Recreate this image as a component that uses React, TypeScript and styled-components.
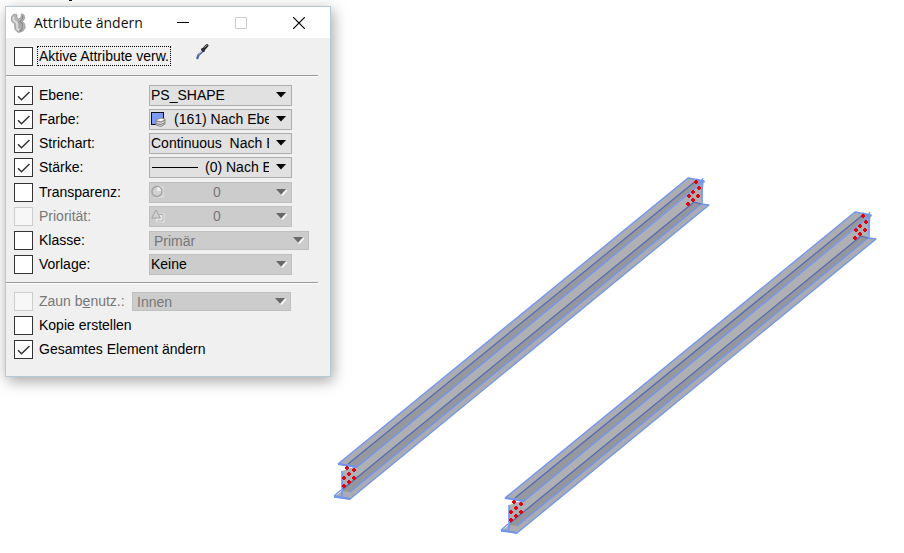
import React, { useState } from 'react';
import styled, { createGlobalStyle, css } from 'styled-components';

const GlobalStyle = createGlobalStyle`
  *, *::before, *::after { box-sizing: border-box; }
  body {
    margin: 0;
    background: #fff;
    color: #000;
    font: 14px/20px "Liberation Sans", Arial, sans-serif;
  }
`;

const Desktop = styled.main`
  display: flex;
  align-items: flex-start;
  position: relative;
  padding-left: 5px;
  min-height: 100vh;
  overflow: hidden;
`;

const TextRemnant = styled.span`
  position: absolute;
  top: 0;
  left: 69px;
  width: 3px;
  height: 1px;
  background: #111;
`;

const Dialog = styled.section`
  flex: 0 0 326px;
  margin-top: 6px;
  padding-bottom: 15px;
  background: #f0f0f0;
  border: 1px solid #b4c9d6;
  box-shadow: 2px 4px 14px rgba(0, 0, 0, 0.36);
`;

const TitleBar = styled.header`
  display: flex;
  align-items: center;
  height: 31px;
  padding: 0 2px 0 4px;
  background: #fff;
`;

const Title = styled.h1`
  flex: 1;
  margin: 0 0 0 6px;
  font: 14px/20px "Open Sans", "Noto Sans", sans-serif;
  color: #111;
`;

const WindowButton = styled.button`
  display: flex;
  align-items: center;
  justify-content: center;
  width: 58px;
  height: 30px;
  padding: 0;
  border: 0;
  background: none;
  color: #000;
  &:disabled { color: #ccc; }
`;

const Group = styled.div<{ $top: number; $bottom: number }>`
  padding: ${p => p.$top}px 0 ${p => p.$bottom}px 8px;
`;

const Divider = styled.hr`
  margin: 0 12px 0 0;
  border: 0;
  border-top: 1px solid #999;
  border-bottom: 1px solid #fff;
`;

const Row = styled.div`
  display: flex;
  align-items: center;
  height: 24px;
`;

const Check = styled.input`
  appearance: none;
  flex: none;
  width: 19px;
  height: 19px;
  margin: 0;
  background: #fff;
  border: 1px solid #333;
  &:disabled { background: #f7f7f7; border-color: #ccc; }
  &:checked {
    background: #fff url("data:image/svg+xml,%3Csvg xmlns='http://www.w3.org/2000/svg' width='17' height='17'%3E%3Cpath d='M3 9.2 6.5 12.7 14.5 5' fill='none' stroke='%23333' stroke-width='1.5'/%3E%3C/svg%3E") center no-repeat;
  }
`;

const Caption = styled.label<{ $width?: number; $dim?: boolean; $focus?: boolean }>`
  flex: none;
  margin-left: 4px;
  padding: 0 1px;
  border: 1px dotted ${p => (p.$focus ? '#000' : 'transparent')};
  width: ${p => (p.$width ? `${p.$width}px` : 'auto')};
  color: ${p => (p.$dim ? '#777' : '#000')};
  line-height: 18px;
  white-space: nowrap;
`;

const PickerButton = styled.button`
  display: flex;
  margin: 0 0 8px 24px;
  padding: 0;
  border: 0;
  background: none;
`;

const Combo = styled.div`
  display: grid;
  align-items: center;
  & > * { grid-area: 1 / 1; }
`;

const Choice = styled.select<{ $width: number; $indent: number; $low?: boolean; $grey?: boolean; $dim?: boolean }>`
  appearance: none;
  width: ${p => p.$width}px;
  height: ${p => (p.$low ? 19 : 21)}px;
  margin: 0;
  padding: 0 22px 0 ${p => p.$indent}px;
  overflow: hidden;
  border: 1px solid #adadad;
  border-radius: 0;
  background: #e1e1e1;
  font: 14px/18px "Liberation Sans", Arial, sans-serif;
  color: ${p => (p.$dim ? '#777' : '#000')};
  opacity: 1;
  ${p => p.$grey && css`
    background: #ccc;
    border-color: #bfbfbf;
  `}
`;

const Arrow = styled.svg`
  justify-self: end;
  margin-right: 5px;
  pointer-events: none;
`;

const Symbol = styled.span`
  display: flex;
  justify-self: start;
  margin-left: 2px;
  pointer-events: none;
`;

const Scene = styled.svg`
  display: block;
  flex: 1;
  min-width: 0;
`;

const WrenchIcon = () => (
  <svg width="18" height="20" viewBox="0 0 18 20" aria-hidden="true">
    <path d="M4 1 1.5 3.5 1.5 8 4.5 11 5 16.5 8 19.5 12.5 18.5 15.2 15 14.5 10.5 12.5 8.5 14.8 5.5 14 2 11.5.8 10.8 4.5 8.5 6 7 4.5 7 1.8Z" fill="#b4b4b4" stroke="#999" strokeWidth=".8" />
    <path d="M3.5 3.5 3.5 7 7 10 7.2 15.5 9 17.5" fill="none" stroke="#dedede" strokeWidth="1.8" />
    <path d="M12.8 2.5 12.5 5.5 10 8.5 12.5 11 12 16.5 9.5 18.5" fill="none" stroke="#868686" strokeWidth="1.1" />
    <path d="M8 8.5 10 11 9.5 15" fill="none" stroke="#a0a0a0" strokeWidth="1.2" />
  </svg>
);

const DropperIcon = () => (
  <svg width="14" height="18" viewBox="0 0 14 18" aria-hidden="true">
    <path d="M8.5 7.5 3.5 12 2 16" fill="none" stroke="#48669b" strokeWidth="2.2" />
    <path d="M8 7 3.5 11.5" stroke="#b9c5d6" strokeWidth="1" />
    <path d="M6.5 5.5 9.5 8.5" stroke="#292b33" strokeWidth="1.8" />
    <path d="M8 7 12 2.5" stroke="#292b33" strokeWidth="3" strokeLinecap="round" />
    <path d="M9.5 4.5 12 2" stroke="#999" strokeWidth="1" />
  </svg>
);

const ColourIcon = () => (
  <svg width="15" height="15" viewBox="0 0 15 15" aria-hidden="true">
    <rect x=".5" y=".5" width="12" height="12" fill="#7d98fb" stroke="#111" />
    <path d="M5 8 10 6 14 7 14 12 10 14.5 5 13Z" fill="#ddd" stroke="#888" />
    <path d="M5 9 10 10 14 8M5 11.5 10 12.5 14 10.5" fill="none" stroke="#777" />
    <path d="M6 8 10 6.8 13 7.5 10 9Z" fill="#fff" />
  </svg>
);

const LineIcon = () => (
  <svg width="47" height="3" viewBox="0 0 47 3" aria-hidden="true">
    <path d="M1 1.5H47" stroke="#000" />
  </svg>
);

const SphereIcon = () => (
  <svg width="14" height="14" viewBox="0 0 14 14" aria-hidden="true">
    <path d="M8 1H13V13H3" fill="#d8d8d8" />
    <circle cx="6" cy="6.5" r="5" fill="#d2d2d2" stroke="#a0a0a0" strokeWidth="1.3" />
    <path d="M6 2V6H10A4 4 0 0 0 6 2" fill="#eee" />
  </svg>
);

const PriorityIcon = () => (
  <svg width="14" height="14" viewBox="0 0 14 14" aria-hidden="true">
    <path d="M8 5.5H12.5V12.5H6V10" fill="#e4e4e4" stroke="#f3f3f3" strokeWidth="1.5" />
    <path d="M5 1 9.3 9H.7Z" fill="#d0d0d0" stroke="#a3a3a3" />
    <path d="M8 5.5H12V12H6" fill="none" stroke="#aaa" />
  </svg>
);

type AttributeRow = {
  id: string;
  label: string;
  value: string;
  locked?: boolean;
  dim?: boolean;
  grey?: boolean;
  width?: number;
  low?: boolean;
  indent?: number;
  icon?: React.ReactNode;
};

const levelAttributes: AttributeRow[] = [
  { id: 'ebene', label: 'Ebene:', value: 'PS_SHAPE' },
  { id: 'farbe', label: 'Farbe:', value: '(161) Nach Ebene', indent: 24, icon: <ColourIcon /> },
  { id: 'strichart', label: 'Strichart:', value: 'Continuous\u00a0 Nach Ebene' },
  { id: 'staerke', label: 'Stärke:', value: '(0) Nach Ebene', indent: 55, icon: <LineIcon /> },
];

const otherAttributes: AttributeRow[] = [
  { id: 'transparenz', label: 'Transparenz:', value: '0', grey: true, dim: true, indent: 63, icon: <SphereIcon /> },
  { id: 'prioritaet', label: 'Priorität:', value: '0', locked: true, grey: true, dim: true, indent: 63, icon: <PriorityIcon /> },
  { id: 'klasse', label: 'Klasse:', value: 'Primär', grey: true, dim: true, width: 160, low: true, indent: 4 },
  { id: 'vorlage', label: 'Vorlage:', value: 'Keine', grey: true },
];

type ComboBoxProps = Pick<AttributeRow, 'label' | 'value' | 'dim' | 'grey' | 'width' | 'low' | 'indent' | 'icon'>;

function ComboBox({ label, value, dim, grey, width = 143, low, indent = 1, icon }: ComboBoxProps) {
  return (
    <Combo>
      <Choice aria-label={label} disabled={dim} $width={width} $indent={indent} $low={low} $grey={grey} $dim={dim}>
        <option>{value}</option>
      </Choice>
      {icon && <Symbol>{icon}</Symbol>}
      <Arrow width="11" height="7" viewBox="0 0 11 7" aria-hidden="true">
        {grey && <path d="M11 1 6 6.5" stroke="#fff" strokeWidth="1.5" />}
        <path d="M0 0H10L5 5.5Z" fill={grey ? '#686868' : '#000'} />
      </Arrow>
    </Combo>
  );
}

const nearBoltHoles = [
  [347, 468], [354, 470], [349, 474], [354, 478], [344, 478], [349, 482], [344, 486],
];

const farBoltHoles = [
  [696, 182], [699, 188], [693, 192], [698, 196], [689, 196], [693, 200], [688, 204],
];

function Bolt({ x, y }: { x: number; y: number }) {
  return <path d={`M${x - 2} ${y}h4M${x} ${y - 2}v4`} stroke="#e3000f" strokeWidth="2" />;
}

function Beam() {
  return (
    <g strokeLinejoin="round">
      <path d="M342 471 357 466 704 181 701 204 351 498 342 492Z" fill="#afb0b3" />
      <path d="M342 491 694 203 701 204 709 205 350 499 334 497Z" fill="#aaacb1" />
      <path d="M342 491 344 488 694 202 701 204 350 492Z" fill="#94969e" />
      <path d="M338 464 688 178 703 181 357 467Z" fill="#abadb2" />
      <path d="M348 464 697 180 703 181 357 467Z" fill="#96989f" />
      <g fill="none" stroke="#7294f0" strokeWidth="1.3">
        <path d="M338 464 688 178 704 181 357 467 347 465 338 464" />
        <path d="M334 496 341 490M350 492 701 204 709 205 350 499 334 497" />
        <path d="M342 471V496M702 180V204" strokeWidth="1.6" />
        <path d="M334 496 350 499M338 464 357 467" strokeWidth="1.8" />
        <path d="M696 179 705 182M703 178 700 183" />
      </g>
      <path d="M348 464 697 180M343 489 694 202 701 204" fill="none" stroke="#5268b4" strokeWidth="1.2" />
      {[...nearBoltHoles, ...farBoltHoles].map(([x, y]) => <Bolt key={`${x}-${y}`} x={x} y={y} />)}
    </g>
  );
}

export default function App() {
  const [checks, setChecks] = useState<Record<string, boolean>>({
    ebene: true, farbe: true, strichart: true, staerke: true, gesamt: true,
  });
  const bind = (id: string) => ({
    id,
    type: 'checkbox',
    checked: !!checks[id],
    onChange: () => setChecks(c => ({ ...c, [id]: !c[id] })),
  });
  const renderRow = (a: AttributeRow) => (
    <Row key={a.id}>
      <Check {...bind(a.id)} disabled={a.locked} />
      <Caption htmlFor={a.id} $dim={a.locked} $width={112}>{a.label}</Caption>
      <ComboBox {...a} />
    </Row>
  );

  return (
    <>
      <GlobalStyle />
      <Desktop>
        <TextRemnant />
        <Dialog aria-labelledby="dialog-title">
          <TitleBar>
            <WrenchIcon />
            <Title id="dialog-title">Attribute ändern</Title>
            <WindowButton aria-label="Minimieren">
              <svg width="12" height="12"><path d="M0 5.5H12" stroke="currentColor" /></svg>
            </WindowButton>
            <WindowButton aria-label="Maximieren" disabled>
              <svg width="12" height="12"><path d="M.5.5H11.5V11.5H.5Z" fill="none" stroke="currentColor" /></svg>
            </WindowButton>
            <WindowButton aria-label="Schließen">
              <svg width="12" height="12"><path d="M0 0 12 12M12 0 0 12" stroke="currentColor" strokeWidth="1.2" /></svg>
            </WindowButton>
          </TitleBar>
          <Group $top={6} $bottom={7}>
            <Row>
              <Check {...bind('aktiv')} />
              <Caption htmlFor="aktiv" $focus>Aktive Attribute verw.</Caption>
              <PickerButton aria-label="Attribute aufnehmen"><DropperIcon /></PickerButton>
            </Row>
          </Group>
          <Divider />
          <Group $top={6} $bottom={0}>{levelAttributes.map(renderRow)}</Group>
          <Group $top={1} $bottom={6}>{otherAttributes.map(renderRow)}</Group>
          <Divider />
          <Group $top={5} $bottom={0}>
            <Row>
              <Check {...bind('zaun')} disabled />
              <Caption htmlFor="zaun" $dim $width={95}>Zaun b<u>e</u>nutz.:</Caption>
              <ComboBox label="Zaun benutzen" value="Innen" dim grey low width={159} indent={4} />
            </Row>
            <Row>
              <Check {...bind('kopie')} />
              <Caption htmlFor="kopie">Kopie erstellen</Caption>
            </Row>
            <Row>
              <Check {...bind('gesamt')} />
              <Caption htmlFor="gesamt">Gesamtes Element ändern</Caption>
            </Row>
          </Group>
        </Dialog>
        <Scene viewBox="331 0 573 553" role="img" aria-label="Zwei Stahlträger">
          <Beam />
          <g transform="translate(167 34)"><Beam /></g>
        </Scene>
      </Desktop>
    </>
  );
}
